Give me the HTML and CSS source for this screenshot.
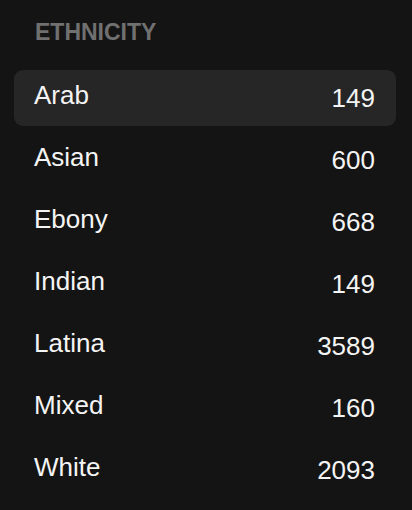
FILE: index.html
```html
<!DOCTYPE html>
<html>
<head>
<meta charset="utf-8">
<link rel="stylesheet" href="styles.css">
</head>
<body>
<div class="panel">
  <h2 class="title">ETHNICITY</h2>
  <ul class="list">
    <li class="row active"><span class="name">Arab</span><span class="count">149</span></li>
    <li class="row"><span class="name">Asian</span><span class="count">600</span></li>
    <li class="row"><span class="name">Ebony</span><span class="count">668</span></li>
    <li class="row"><span class="name">Indian</span><span class="count">149</span></li>
    <li class="row"><span class="name">Latina</span><span class="count">3589</span></li>
    <li class="row"><span class="name">Mixed</span><span class="count">160</span></li>
    <li class="row"><span class="name">White</span><span class="count">2093</span></li>
  </ul>
</div>
</body>
</html>
```
FILE: styles.css
```css
html, body {
  margin: 0;
  padding: 0;
  background: #141414;
  height: 100%;
}
body {
  font-family: "Liberation Sans", Arial, sans-serif;
  color: #f4f4f4;
}
.panel {
  padding: 18px 16px 0 14px;
}
.title {
  margin: 0 0 24px 21px;
  font-size: 23px;
  line-height: 28px;
  font-weight: 700;
  color: #707070;
}
.list {
  list-style: none;
  margin: 0;
  padding: 0;
  display: flex;
  flex-direction: column;
  gap: 6px;
}
.row {
  display: flex;
  justify-content: space-between;
  align-items: flex-start;
  height: 56px;
  box-sizing: border-box;
  padding: 10px 21px 16px 20px;
  font-size: 26px;
  line-height: 30px;
  border-radius: 9px;
}
.count {
  margin-top: 3px;
}
.row.active {
  background: #262626;
}
```
